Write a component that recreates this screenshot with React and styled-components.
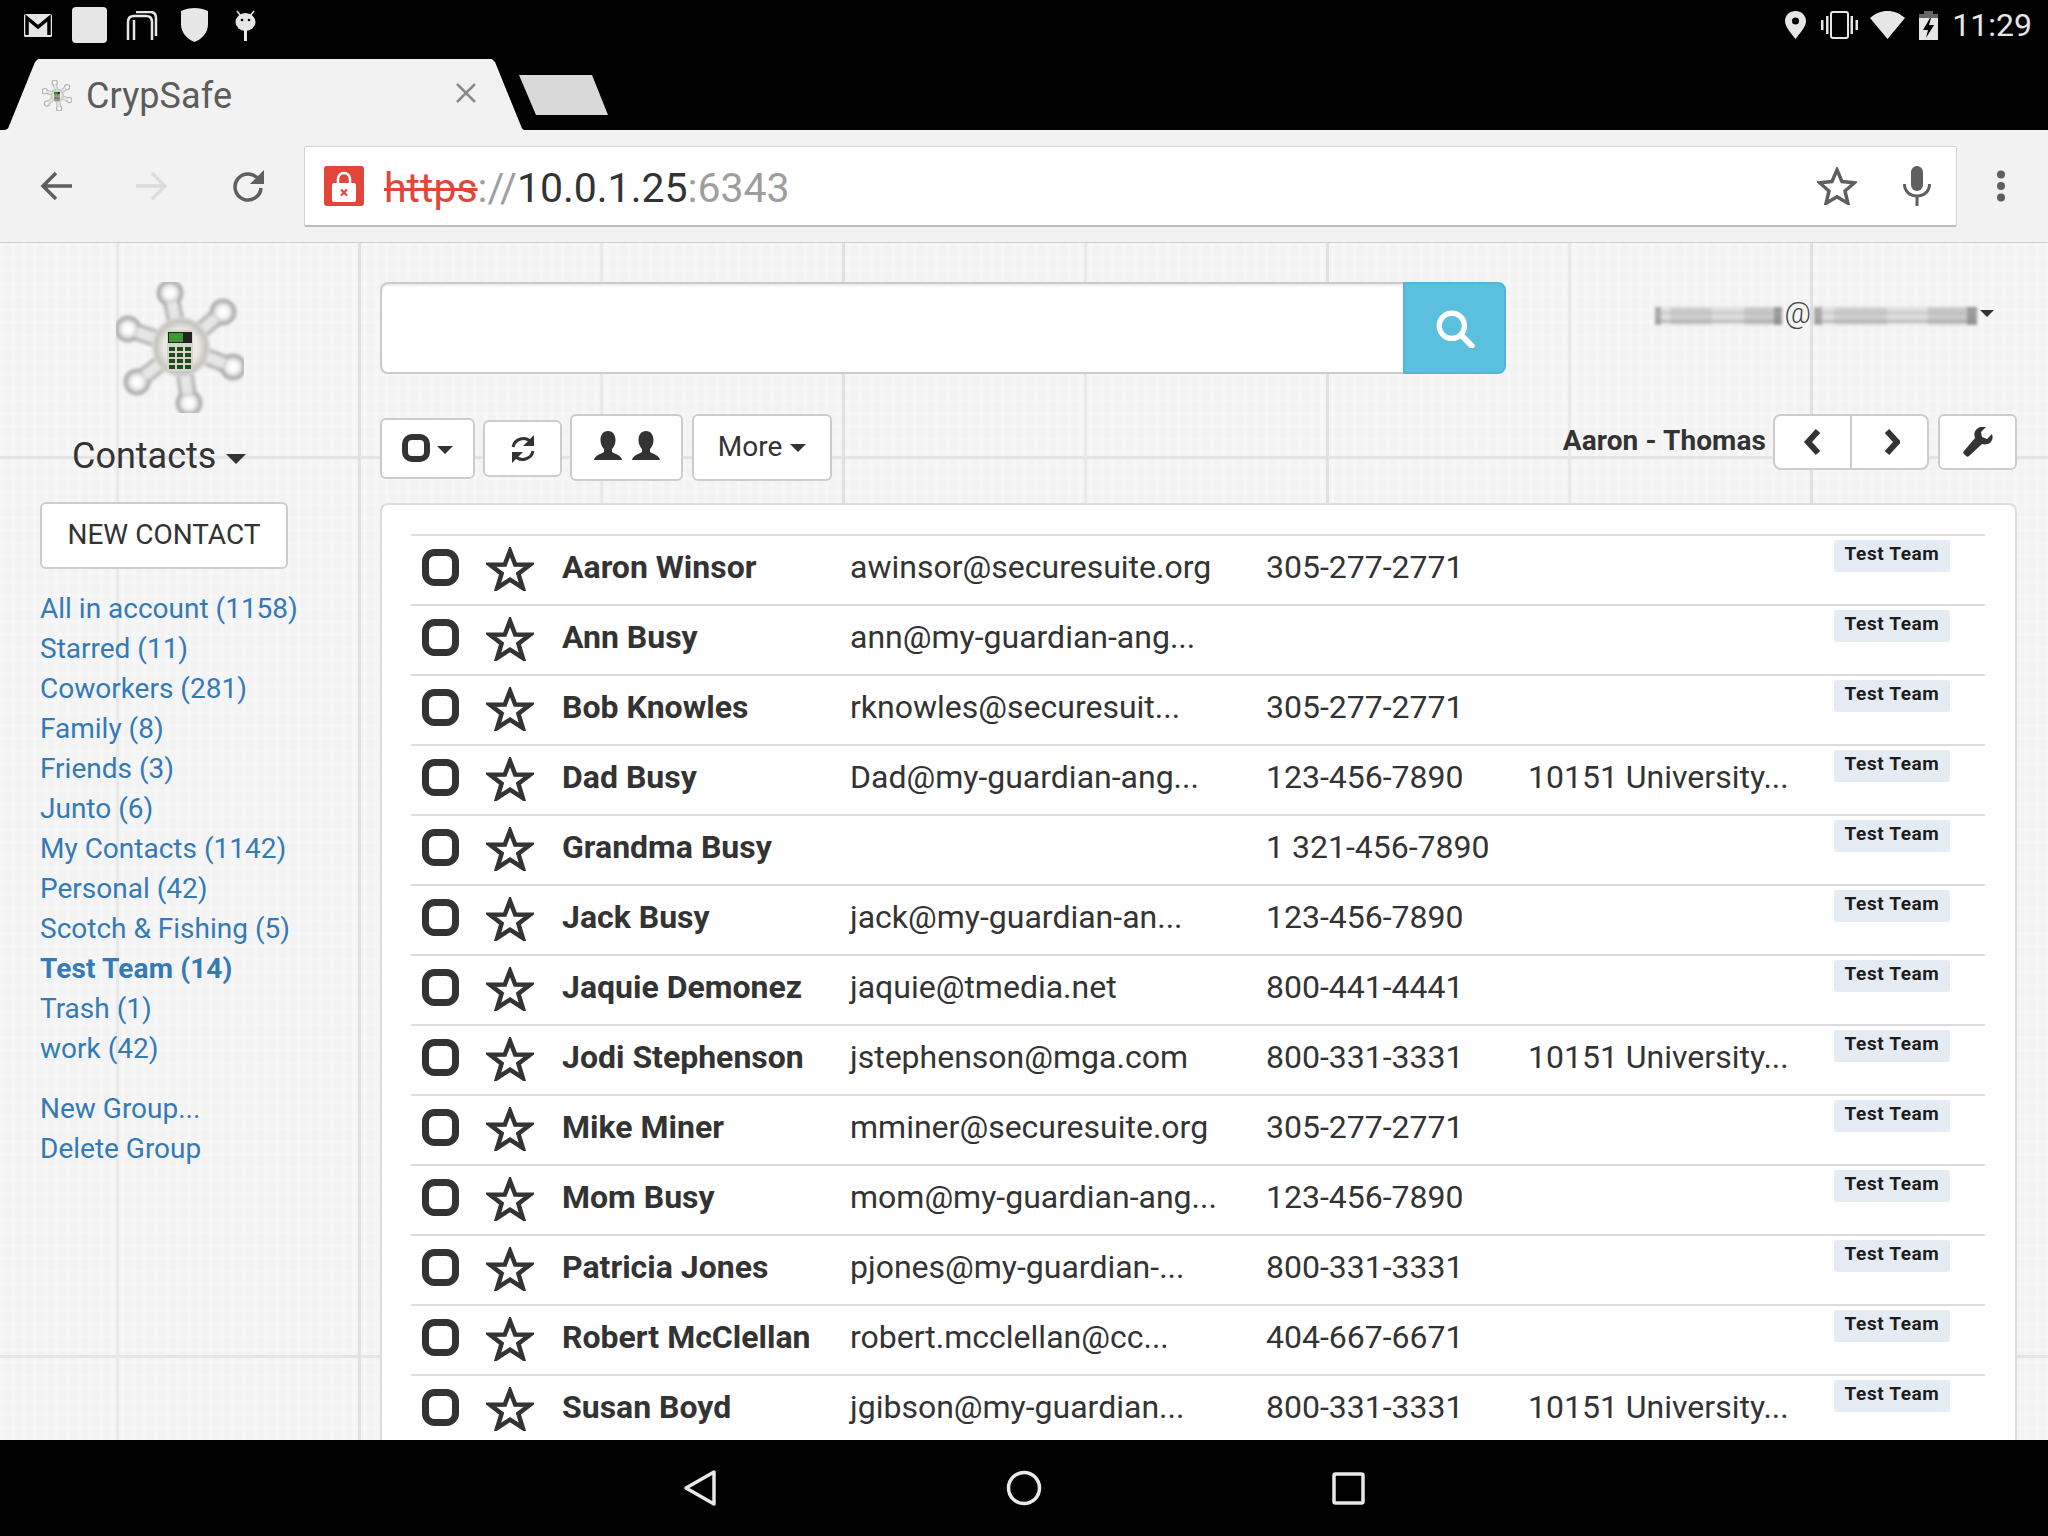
import React from 'react';
import styled, { createGlobalStyle } from 'styled-components';

const Global = createGlobalStyle`
  html, body { margin: 0; padding: 0; background: #000; }
  * { box-sizing: border-box; }
  body { font-family: Roboto, "Liberation Sans", sans-serif; color: #333; }
`;

const Screen = styled.div`
  width: 2048px; height: 1536px; display: flex; flex-direction: column; overflow: hidden; background: #000;
`;
const StatusBar = styled.div`
  height: 50px; margin-bottom: 9px; display: flex; align-items: center; justify-content: space-between;
  padding: 0 16px 0 24px; color: #e6e6e6;
`;
const StatusGroup = styled.div`display: flex; align-items: center;`;
const StatusSvg = styled.svg`
  display: block; flex: none; margin-left: ${p => p.$ml || 0}px; fill: #e6e6e6;
`;
const Clock = styled.span`
  margin-left: 14px; font-size: 32px; line-height: 52px; letter-spacing: 0; color: #e6e6e6;
`;
const TabStrip = styled.div`height: 71px; display: flex; align-items: flex-start; padding-left: 5px;`;
const Tab = styled.div`
  width: 519px; height: 71px; background: #f2f2f2; display: flex; align-items: center;
  padding: 2px 47px 0 37px; clip-path: polygon(0 100%, 3px 98%, 30px 3px, 33px 0, 487px 0, 490px 3px, 517px 98%, 519px 100%);
`;
const TabTitle = styled.span`
  font-size: 36px; color: #5c5c5c; margin-left: 14px; flex: 1; letter-spacing: 0.1px;
`;
const TabClose = styled.svg`display: block; flex: none; margin-top: -5px;`;
const NewTab = styled.div`
  width: 89px; height: 40px; margin: 16px 0 0 -5px; background: #d9d9d9;
  clip-path: polygon(0 0, 73px 0, 89px 100%, 17px 100%);
`;
const BrowserBar = styled.div`
  height: 112px; flex: none; background: #f2f2f2; display: flex; align-items: center; padding: 1px 0 0 40px;
`;
const BarIcon = styled.svg`
  display: block; flex: none; margin-left: ${p => p.$ml || 0}px; margin-right: ${p => p.$mr || 0}px; margin-top: ${p => p.$mt || 0}px;
`;
const Omnibox = styled.div`
  width: 1653px; height: 81px; margin-left: 40px; background: #fff; border: 1px solid #d4d4d4; border-bottom: 2px solid #bdbdbd; border-radius: 2px;
  display: flex; align-items: center; padding-left: 19px; font-size: 41px;
`;
const LockBadge = styled.div`
  width: 40px; height: 40px; border-radius: 3px; background: #e2463a; display: flex; align-items: center; justify-content: center; flex: none;
`;
const Url = styled.div`margin: 4px 0 0 20px; flex: 1; white-space: nowrap; line-height: 1; color: #333;`;
const Scheme = styled.span`color: #e2463a; text-decoration: line-through; text-decoration-thickness: 3px;`;
const UrlGrey = styled.span`color: #9e9e9e;`;

const Page = styled.div`
  height: 1198px; flex: none; display: flex; overflow: hidden; background-color: #f3f3f3; border-top: 1px solid #cdcdcd;
  background-image:
    linear-gradient(90deg, #e0e0e0 0, #e0e0e0 3px, transparent 3px),
    linear-gradient(90deg, #e9e9e9 0, #e9e9e9 3px, transparent 3px),
    linear-gradient(180deg, #e4e4e4 0, #e4e4e4 3px, transparent 3px),
    repeating-linear-gradient(90deg, rgba(255,255,255,.22) 0 4px, transparent 4px 11px),
    repeating-linear-gradient(180deg, rgba(255,255,255,.18) 0 3px, transparent 3px 13px);
  background-size: 484px 100%, 484px 100%, 100% 899px, auto, auto;
  background-position: 358px 0, 116px 0, 0 213px, 0 0, 0 0;
`;
const Sidebar = styled.aside`width: 380px; flex: none; padding: 39px 0 0 40px;`;
const LogoWrap = styled.div`padding-left: 76px; height: 131px;`;
const SectionTitle = styled.div`
  margin: 21px 0 0 32px; font-size: 36px; line-height: 44px; color: #333; display: flex; align-items: center;
`;
const Caret = styled.span`
  display: inline-block; width: 0; height: 0; margin-left: ${p => p.$ml ?? 10}px;
  border-left: ${p => p.$s || 10}px solid transparent; border-right: ${p => p.$s || 10}px solid transparent;
  border-top: ${p => p.$s || 10}px solid #333; margin-top: ${p => p.$mt ?? 6}px;
`;
const NewContact = styled.button`
  display: block; width: 248px; height: 67px; margin-top: 24px; background: #fff; border: 2px solid #ccc; border-radius: 6px;
  font: 400 28px Roboto, sans-serif; color: #333; padding: 0 0 3px;
`;
const GroupList = styled.div`margin-top: 20px;`;
const GroupLink = styled.a`
  display: block; height: 40px; line-height: 40px; font-size: 28px; white-space: nowrap; color: #337ab7;
  font-weight: ${p => (p.$active ? 700 : 400)}; letter-spacing: ${p => (p.$active ? 0.15 : 0)}px;
`;
const GroupActions = styled.div`margin-top: 20px;`;

const Main = styled.main`flex: 1; min-width: 0; padding: 39px 31px 0 0;`;
const SearchRow = styled.div`display: flex; align-items: flex-start;`;
const SearchInput = styled.div`
  width: 1023px; height: 92px; background: #fff; border: 2px solid #ccc; border-right: none; border-radius: 8px 0 0 8px;
  box-shadow: inset 0 2px 2px rgba(0,0,0,.07);
`;
const SearchButton = styled.div`
  width: 103px; height: 92px; background: #5bc0de; border: 2px solid #4fb6d6; border-radius: 0 8px 8px 0; display: flex; align-items: center; justify-content: center; padding-top: 2px;
`;
const Account = styled.div`
  margin: 15px 23px 0 auto; display: flex; align-items: center; font-size: 29px; color: #444; height: 32px;
`;
const Smudge = styled.div`
  width: ${p => p.$w}px; height: 18px; margin-top: 5px; filter: blur(1.8px);
  background:
    linear-gradient(180deg, transparent 0 28%, rgba(170,170,170,.5) 28% 38%, transparent 38% 72%, rgba(130,130,130,.5) 72% 82%, transparent 82%),
    linear-gradient(90deg, #aaa 0 5%, #e0e0e0 5% 12%, #cfcfcf 12% 45%, #dedede 45% 70%, #cacaca 70% 94%, #999 94%);
`;
const At = styled.span`margin: 0 3px; line-height: 32px; font-weight: 300;`;

const ToolRow = styled.div`display: flex; align-items: flex-start; margin-top: 40px; height: 89px;`;
const ToolButton = styled.div`
  width: ${p => p.$w}px; height: ${p => p.$h}px; margin-top: ${p => p.$top || 0}px; margin-left: ${p => p.$ml || 0}px; flex: none;
  background: #fff; border: 2px solid #ccc; border-radius: 6px; display: flex; align-items: center; justify-content: center;
  font-size: 28px; color: #333; padding-bottom: ${p => p.$pb || 0}px;
`;
const RangeLabel = styled.div`
  margin-left: auto; font-weight: 700; font-size: 28px; line-height: 54px; white-space: nowrap; color: #333; letter-spacing: 0.1px;
`;
const NavGroup = styled.div`
  margin-left: 7px; width: 156px; height: 56px; display: flex; background: #fff; border: 2px solid #ccc; border-radius: 8px; flex: none;
`;
const NavCell = styled.div`
  flex: 1; display: flex; align-items: center; justify-content: center;
  & + & { border-left: 2px solid #ccc; }
`;
const Panel = styled.section`
  background: #fff; border: 2px solid #ddd; border-bottom: none; border-radius: 8px 8px 0 0; padding: 29px 30px 0 29px;
`;
const Row = styled.div`
  height: 70px; display: grid; grid-template-columns: 75px 76px 288px 416px 262px 306px 1fr; border-top: 2px solid #ddd;
  font-size: 32px; line-height: 63px; white-space: nowrap; color: #333;
`;
const Cell = styled.div`min-width: 0; overflow: visible;`;
const IconCell = styled.div`padding-top: ${p => p.$top}px; padding-left: ${p => p.$left || 0}px;`;
const Name = styled(Cell)`font-weight: 700;`;
const Tag = styled.div`
  width: 116px; height: 32px; margin-top: 4px; border-radius: 3px; background: #e4ebf2; color: #1c1c1c; font-weight: 700;
  font-size: 19px; line-height: 28px; text-align: center; letter-spacing: 0.6px;
`;
const NavBar = styled.div`height: 96px; flex: none; background: #000; display: flex; justify-content: center; align-items: center;`;
const NavSlot = styled.div`width: 324px; display: flex; justify-content: center;`;

const Gmail = () => (
  <StatusSvg width="28" height="23" viewBox="0 0 28 23">
    <rect x="0" y="0" width="28" height="23" rx="1.5" />
    <path d="M3 21V4l11 9 11-9v17" fill="none" stroke="#000" strokeWidth="3.5" />
  </StatusSvg>
);
const Star = ({ size = 48, h = 44, stroke = 4.5, color = '#333' }) => (
  <svg width={size} height={h} viewBox="0 0 48 44" style={{ display: 'block' }}>
    <path d="M24 4 L29.2 17.6 L44 17.8 L32.4 26.6 L36.8 41 L24 32.6 L11.2 41 L15.6 26.6 L4 17.8 L18.8 17.6 Z" fill="none" stroke={color} strokeWidth={stroke} />
  </svg>
);
const Check = ({ w = 37, h = 37, s = 7, r = 9 }) => (
  <svg width={w} height={h} viewBox={`0 0 ${w} ${h}`} style={{ display: 'block' }}>
    <rect x={s / 2} y={s / 2} width={w - s} height={h - s} rx={r} fill="none" stroke="#333" strokeWidth={s} />
  </svg>
);
const Person = ({ x = 0 }) => (
  <path transform={`translate(${x} 0)`} d="M14 0c5 0 7.500 4 7.500 9 0 4-1.500 7-3.500 9v3c3 2 9 3 10 8H0c1-5 7-6 10-8v-3c-2-2-3.500-5-3.500-9C6.500 4 9 0 14 0z" fill="#333" />
);
const Logo = ({ w = 128, h = 131, id = 'big' }) => {
  const ends = [[170, 293], [223, 312], [233, 367], [189, 403], [137, 382], [128, 329]];
  return (
    <svg width={w} height={h} viewBox="116 282 128 131" style={{ display: 'block', flex: 'none' }}>
      <defs>
        <radialGradient id={`${id}k`}><stop offset="0.3" stopColor="#fff" /><stop offset="0.65" stopColor="#eee" /><stop offset="1" stopColor="#c4c4c4" /></radialGradient>
        <radialGradient id={`${id}b`}><stop offset="0.6" stopColor="#eceae6" /><stop offset="0.88" stopColor="#c2c1bb" /><stop offset="1" stopColor="#dededa" /></radialGradient>
        <filter id={`${id}s`} x="-10%" y="-10%" width="120%" height="120%"><feGaussianBlur stdDeviation="1.6" /></filter>
      </defs>
      <g filter={`url(#${id}s)`}>
        {ends.map(([x, y]) => <line key={x} x1="181" y1="347" x2={x} y2={y} stroke="#bcbcbc" strokeWidth="18" />)}
        {ends.map(([x, y]) => <circle key={x} cx={x} cy={y} r="13.500" fill="#b0b0b0" />)}
        {ends.map(([x, y]) => <line key={x} x1="181" y1="347" x2={x} y2={y} stroke="#e6e6e6" strokeWidth="10" />)}
        {ends.map(([x, y]) => <circle key={x} cx={x} cy={y} r="10" fill={`url(#${id}k)`} />)}
        <ellipse cx="181" cy="347" rx="29" ry="30" fill={`url(#${id}b)`} />
      </g>
      <rect x="167" y="330" width="26" height="41" rx="2" fill="#d6d5cd" />
      <rect x="168" y="332" width="24" height="11" fill="#222" />
      <rect x="169" y="333" width="14" height="9" fill="#3d9a33" />
      {[0, 1, 2, 3].map(r => [0, 1, 2].map(c => (
        <rect key={`${r}${c}`} x={169 + c * 8} y={347 + r * 6} width="6" height="4" fill="#1f4a1c" />
      )))}
    </svg>
  );
};

const contacts = [
  ['Aaron Winsor', 'awinsor@securesuite.org', '305-277-2771', ''],
  ['Ann Busy', 'ann@my-guardian-ang...', '', ''],
  ['Bob Knowles', 'rknowles@securesuit...', '305-277-2771', ''],
  ['Dad Busy', 'Dad@my-guardian-ang...', '123-456-7890', '10151 University...'],
  ['Grandma Busy', '', '1 321-456-7890', ''],
  ['Jack Busy', 'jack@my-guardian-an...', '123-456-7890', ''],
  ['Jaquie Demonez', 'jaquie@tmedia.net', '800-441-4441', ''],
  ['Jodi Stephenson', 'jstephenson@mga.com', '800-331-3331', '10151 University...'],
  ['Mike Miner', 'mminer@securesuite.org', '305-277-2771', ''],
  ['Mom Busy', 'mom@my-guardian-ang...', '123-456-7890', ''],
  ['Patricia Jones', 'pjones@my-guardian-...', '800-331-3331', ''],
  ['Robert McClellan', 'robert.mcclellan@cc...', '404-667-6671', ''],
  ['Susan Boyd', 'jgibson@my-guardian...', '800-331-3331', '10151 University...'],
];
const groups = ['All in account (1158)', 'Starred (11)', 'Coworkers (281)', 'Family (8)', 'Friends (3)', 'Junto (6)', 'My Contacts (1142)', 'Personal (42)', 'Scotch & Fishing (5)', 'Test Team (14)', 'Trash (1)', 'work (42)'];

export default function App() {
  return (
    <Screen>
      <Global />
      <StatusBar>
        <StatusGroup>
          <Gmail />
          <StatusSvg $ml={20} width="35" height="36" viewBox="0 0 35 36"><rect width="35" height="36" rx="4" /></StatusSvg>
          <StatusSvg $ml={19} width="32" height="29" viewBox="0 0 32 29">
            <path d="M2 29V11c0-4 2-6 6-6h12c4 0 6 2 6 6v18M8 29V9M30 25V7c0-4-2-6-6-6H10" fill="none" stroke="#e6e6e6" strokeWidth="2.500" />
          </StatusSvg>
          <StatusSvg $ml={23} width="27" height="34" viewBox="0 0 27 34"><path d="M13.500 0C18 0 23 1 27 3v13c0 9-6 15-13.500 18C6 31 0 25 0 16V3c4-2 9-3 13.500-3z" /></StatusSvg>
          <StatusSvg $ml={27} width="21" height="31" viewBox="0 0 21 31">
            <path d="M2 1l4 5M19 1l-4 5" stroke="#e6e6e6" strokeWidth="1.500" />
            <ellipse cx="10.500" cy="12" rx="10" ry="9" />
            <circle cx="7" cy="10" r="1.300" fill="#000" /><circle cx="14" cy="10" r="1.300" fill="#000" />
            <rect x="9" y="20" width="3" height="11" />
          </StatusSvg>
        </StatusGroup>
        <StatusGroup>
          <StatusSvg width="21" height="28" viewBox="0 0 21 28"><path fillRule="evenodd" d="M10.500 0C16 0 21 4 21 10c0 6-6 12-10.500 18C6 22 0 16 0 10 0 4 5 0 10.500 0zm0 6.500a3.500 3.500 0 1 0 0 7 3.500 3.500 0 0 0 0-7z" /></StatusSvg>
          <StatusSvg $ml={15} width="37" height="28" viewBox="0 0 37 28">
            <rect x="10" y="1" width="17" height="26" rx="2" fill="none" stroke="#e6e6e6" strokeWidth="2" />
            <rect x="0" y="9" width="2.500" height="10" /><rect x="5" y="5" width="2.500" height="18" /><rect x="29.500" y="5" width="2.500" height="18" /><rect x="34.500" y="9" width="2.500" height="10" />
          </StatusSvg>
          <StatusSvg $ml={12} width="35" height="28" viewBox="0 0 35 28"><path d="M17.500 28L0 7c5-4.500 11-7 17.500-7S30 2.500 35 7z" /></StatusSvg>
          <StatusSvg $ml={14} width="19" height="29" viewBox="0 0 19 29">
            <path d="M5 0h9v3h5v4H0V3h5z" fill="#666" /><rect y="7" width="19" height="22" />
            <path d="M11 7L4 19h5l-2 8 8-13h-5l2-7z" fill="#000" />
          </StatusSvg>
          <Clock>11:29</Clock>
        </StatusGroup>
      </StatusBar>
      <TabStrip>
        <Tab>
          <Logo w={30} h={31} id="fav" />
          <TabTitle>CrypSafe</TabTitle>
          <TabClose width="22" height="20" viewBox="0 0 22 20"><path d="M2 1l18 18M20 1L2 19" stroke="#8a8a8a" strokeWidth="2.500" /></TabClose>
        </Tab>
        <NewTab />
      </TabStrip>
      <BrowserBar>
        <BarIcon $mt={-2} width="32" height="30" viewBox="0 0 32 30"><path d="M32 15H4M16 2L3 15l13 13" fill="none" stroke="#5f5f5f" strokeWidth="3.500" /></BarIcon>
        <BarIcon $ml={64} $mt={-2} width="32" height="30" viewBox="0 0 32 30"><path d="M0 15h28M16 2l13 13-13 13" fill="none" stroke="#dcdcdc" strokeWidth="3.500" /></BarIcon>
        <BarIcon $ml={64} $mt={-2} width="32" height="32" viewBox="0 0 32 32"><path d="M27 10A13 13 0 1 0 29 18" fill="none" stroke="#5f5f5f" strokeWidth="3.500" /><path d="M32 0v14H18z" fill="#5f5f5f" /></BarIcon>
        <Omnibox>
          <LockBadge>
            <svg width="24" height="31" viewBox="0 0 24 31">
              <path d="M6 13V8a6 6 0 0 1 12 0v5" fill="none" stroke="#fff" strokeWidth="2.500" />
              <rect y="12" width="24" height="19" rx="2" fill="#fff" />
              <path d="M9 18.500l6 6M15 18.500l-6 6" stroke="#e2463a" strokeWidth="2.200" />
            </svg>
          </LockBadge>
          <Url><Scheme>https</Scheme><UrlGrey>://</UrlGrey>10.0.1.25<UrlGrey>:6343</UrlGrey></Url>
          <BarIcon width="40" height="38" viewBox="0 0 40 38"><path d="M20 3l5 11.500 12.500 1.200-9.500 8.300 2.900 12.300L20 29.800 9.100 36.300 12 24l-9.500-8.300L15 14.500z" fill="none" stroke="#5f5f5f" strokeWidth="3.500" /></BarIcon>
          <BarIcon $ml={46} $mr={25} width="28" height="40" viewBox="0 0 28 40">
            <rect x="8" y="0" width="12" height="25" rx="6" fill="#5f5f5f" />
            <path d="M1.500 18c0 7 5 12 12.500 12s12.500-5 12.500-12M14 30v10" fill="none" stroke="#5f5f5f" strokeWidth="3" />
          </BarIcon>
        </Omnibox>
        <BarIcon $ml={39} $mt={-2} width="10" height="32" viewBox="0 0 10 32"><circle cx="5" cy="4.500" r="4" fill="#5f5f5f" /><circle cx="5" cy="16" r="4" fill="#5f5f5f" /><circle cx="5" cy="27.500" r="4" fill="#5f5f5f" /></BarIcon>
      </BrowserBar>
      <Page>
        <Sidebar>
          <LogoWrap><Logo /></LogoWrap>
          <SectionTitle>Contacts<Caret /></SectionTitle>
          <NewContact>NEW CONTACT</NewContact>
          <GroupList>
            {groups.map(g => <GroupLink key={g} $active={g.startsWith('Test Team')}>{g}</GroupLink>)}
          </GroupList>
          <GroupActions>
            <GroupLink>New Group...</GroupLink>
            <GroupLink>Delete Group</GroupLink>
          </GroupActions>
        </Sidebar>
        <Main>
          <SearchRow>
            <SearchInput />
            <SearchButton>
              <svg width="40" height="38" viewBox="0 0 38 36"><circle cx="16" cy="15" r="12" fill="none" stroke="#fff" strokeWidth="5" /><path d="M25 24l10 10" stroke="#fff" strokeWidth="5.500" strokeLinecap="round" /></svg>
            </SearchButton>
            <Account>
              <Smudge $w={127} /><At>@</At><Smudge $w={163} />
              <Caret $s={7.500} $ml={3} $mt={0} />
            </Account>
          </SearchRow>
          <ToolRow>
            <ToolButton $w={95} $h={61} $top={4} $pb={2}>
              <Check w={28} h={28} s={6} r={7} /><Caret $s={8} $ml={7} $mt={4} />
            </ToolButton>
            <ToolButton $w={79} $h={57} $top={6} $ml={8}>
              <svg width="28" height="28" viewBox="0 0 28 28">
                <path d="M4 12a10.500 10.500 0 0 1 18-5M24 16a10.500 10.500 0 0 1-18 5" fill="none" stroke="#333" strokeWidth="3" />
                <path d="M25 0v11H14zM3 28V17h11z" fill="#333" />
              </svg>
            </ToolButton>
            <ToolButton $w={113} $h={67} $ml={8} $pb={4}>
              <svg width="66" height="29" viewBox="0 0 66 29"><Person x={0} /><Person x={38} /></svg>
            </ToolButton>
            <ToolButton $w={140} $h={67} $ml={9} $pb={2}>More<Caret $s={8} $ml={8} $mt={2} /></ToolButton>
            <RangeLabel>Aaron - Thomas</RangeLabel>
            <NavGroup>
              <NavCell><svg width="20" height="26" viewBox="0 0 20 26"><path d="M15 2L5 13l10 11" fill="none" stroke="#333" strokeWidth="6" /></svg></NavCell>
              <NavCell><svg width="20" height="26" viewBox="0 0 20 26"><path d="M7 2l10 11L7 24" fill="none" stroke="#333" strokeWidth="6" /></svg></NavCell>
            </NavGroup>
            <ToolButton $w={79} $h={56} $ml={9}>
              <svg width="30" height="30" viewBox="0 0 30 30"><path d="M29 7l-5 5-5-2-1-5 5-5c-4-1-8 0-10 3-2 2-2 5-1 8L1 24c-1 1-1 2 0 3l2 2c1 1 2 1 3 0l13-12c3 1 6 0 8-1 3-3 3-6 2-9z" fill="#333" /></svg>
            </ToolButton>
          </ToolRow>
          <Panel>
            {contacts.map(c => (
              <Row key={c[0]}>
                <IconCell $top={13} $left={11}><Check /></IconCell>
                <IconCell $top={11}><Star /></IconCell>
                <Name>{c[0]}</Name>
                <Cell>{c[1]}</Cell>
                <Cell>{c[2]}</Cell>
                <Cell>{c[3]}</Cell>
                <Tag>Test Team</Tag>
              </Row>
            ))}
          </Panel>
        </Main>
      </Page>
      <NavBar>
        <NavSlot><svg width="34" height="38" viewBox="0 0 34 38"><path d="M31 3v32L3 19z" fill="none" stroke="#e8e8e8" strokeWidth="3.500" strokeLinejoin="round" /></svg></NavSlot>
        <NavSlot><svg width="36" height="36" viewBox="0 0 36 36"><circle cx="18" cy="18" r="15.500" fill="none" stroke="#e8e8e8" strokeWidth="3.500" /></svg></NavSlot>
        <NavSlot><svg width="33" height="33" viewBox="0 0 33 33"><rect x="2" y="2" width="29" height="29" rx="1.500" fill="none" stroke="#e8e8e8" strokeWidth="3.500" /></svg></NavSlot>
      </NavBar>
    </Screen>
  );
}
